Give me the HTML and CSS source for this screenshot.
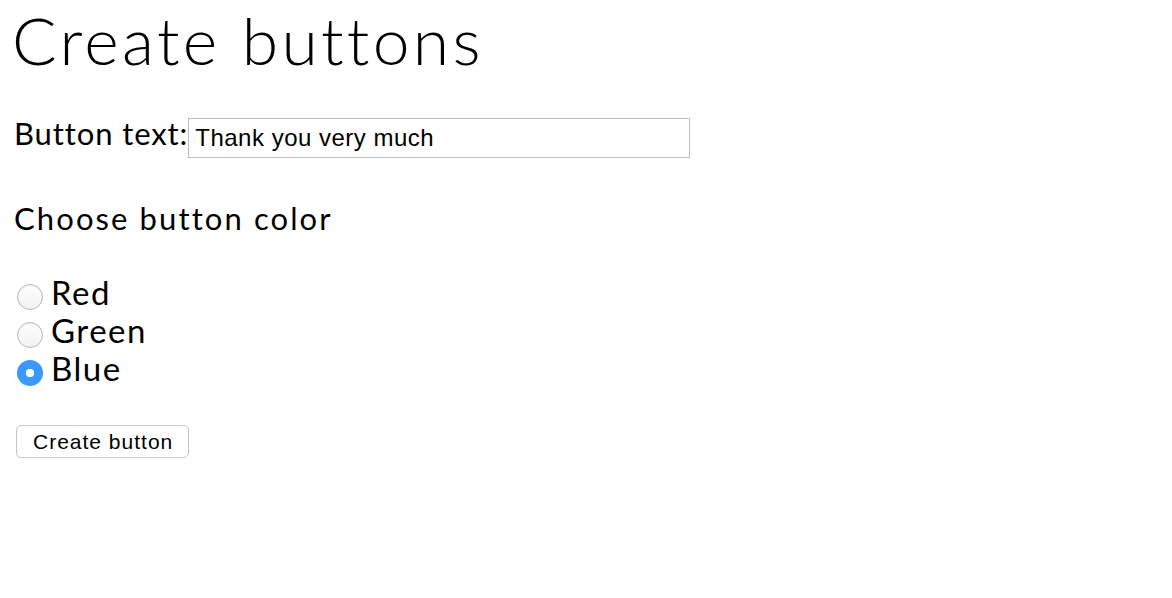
FILE: index.html
```html
<!DOCTYPE html>
<html>
<head>
  <title>Create buttons</title>
  <link rel="stylesheet" href="styles.css">
</head>
<body>

  <h1 class="title">Create buttons</h1>

  <div class="field">
    <label for="buttonText">Button text:</label>
    <input type="text" id="buttonText" value="Thank you very much">
  </div>

  <p class="subhead">Choose button color</p>

  <div class="choices">
    <label class="choice"><input type="radio" name="color" value="red"><span>Red</span></label>
    <label class="choice"><input type="radio" name="color" value="green"><span>Green</span></label>
    <label class="choice"><input type="radio" name="color" value="blue" checked><span>Blue</span></label>
  </div>

  <button type="button" id="createBtn" class="create">Create button</button>

</body>
</html>
```

FILE: styles.css
```css
/* Page */
body {
  margin: 0;
  padding: 0 12px;
  font-family: Lato, "Open Sans", sans-serif;
  color: #000;
  background: #fff;
}
.title {
  font-weight: 300;
  font-size: 66px;
  line-height: 80px;
  letter-spacing: 3.3px;
  margin: 0;
}
.field {
  display: flex;
  align-items: flex-start;
  margin-top: 33px;
}
.field label {
  font-size: 31px;
  line-height: 40px;
  letter-spacing: 0.9px;
  padding-left: 2px;
}
.field input {
  height: 38px;
  width: 494px;
  box-sizing: content-box;
  padding: 0 0 0 6px;
  margin: 5px 0 0 0;
  border: 1px solid #bdbdbd;
  font-family: "Liberation Sans", Arial, sans-serif;
  font-size: 24px;
  letter-spacing: 0.5px;
}
.subhead {
  font-size: 31px;
  line-height: 40px;
  letter-spacing: 2.1px;
  margin: 40px 0 0 2px;
}
.choices {
  display: flex;
  flex-direction: column;
  margin-top: 35px;
}
.choice {
  display: flex;
  align-items: center;
  height: 38px;
  font-size: 33px;
  letter-spacing: 1.5px;
}
.choice input {
  appearance: none;
  -webkit-appearance: none;
  width: 26px;
  height: 26px;
  margin: 9px 8px 0 5px;
  border-radius: 50%;
  border: 1px solid #b8b8b8;
  background: linear-gradient(#fff, #f2f2f2);
  box-shadow: inset 0 1px 1px rgba(0,0,0,0.08);
  box-sizing: border-box;
}
.choice input:checked {
  border: none;
  background: radial-gradient(circle, #fff 0 4px, #3b99fc 4.5px);
  box-shadow: none;
}
.create {
  margin: 38px 0 0 4px;
  height: 33px;
  padding: 0 15px 0 16px;
  background: #fff;
  border: 1px solid #c6c6c6;
  border-radius: 5px;
  font-family: "Liberation Sans", Arial, sans-serif;
  font-size: 21px;
  letter-spacing: 1px;
  color: #000;
}
```
